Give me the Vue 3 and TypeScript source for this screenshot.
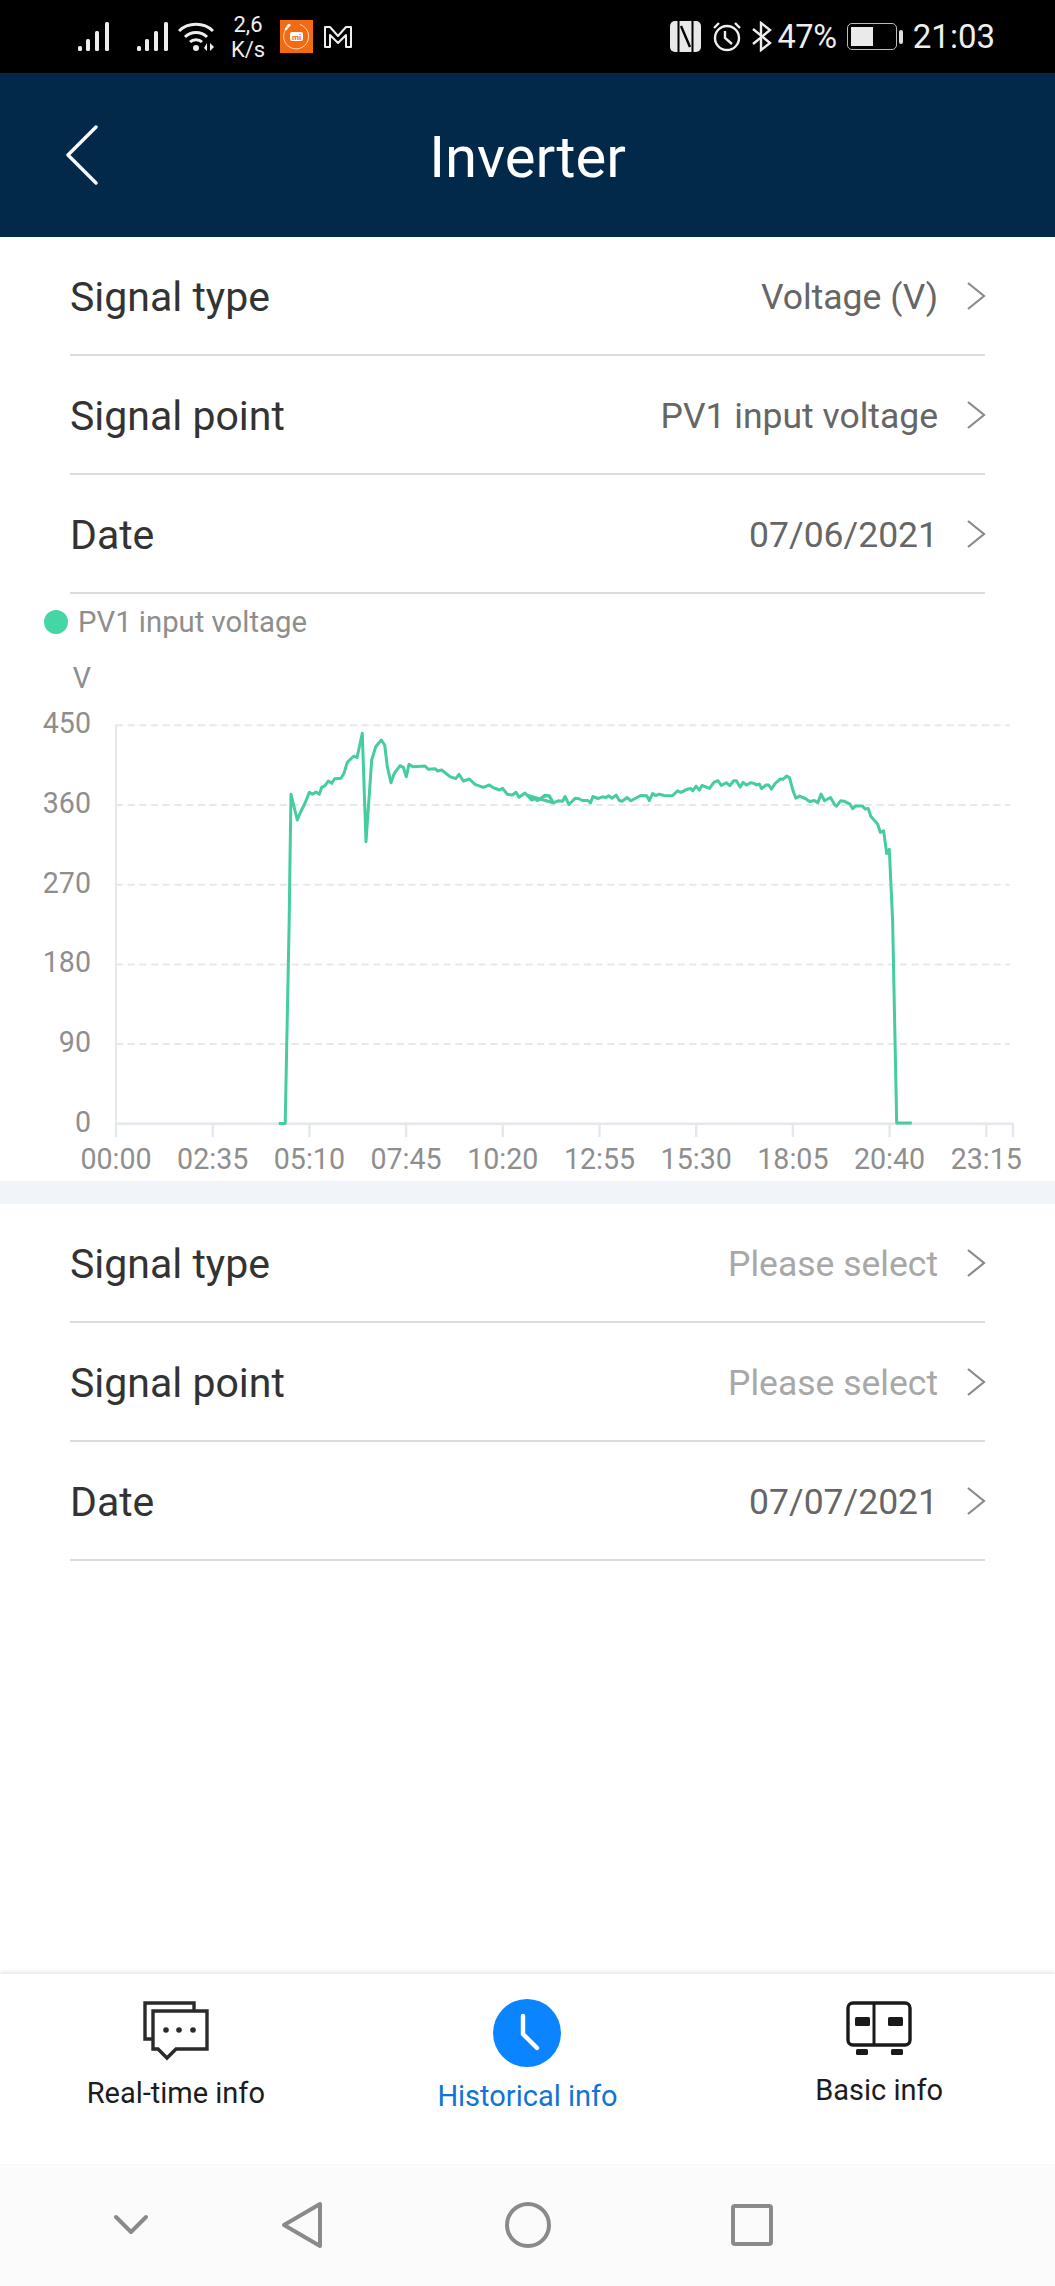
<script setup lang="ts">
type P = [number, number]
const a: P[] = [[278.8,1123.4],[285.2,1123.4],[289.2,920]]
const z9: P[] = [[90,480],[93,283],[112,360],[122,335],[135,310],[148,277],[157,283],[168,276],[178,283],[185,262],[195,257],[205,243],[215,250],[224,236],[243,235],[252,220],[262,187],[272,177],[282,168],[291,173],[307,100],[318,425],[335,180],[347,140],[364,120],[374,135],[382,200],[393,248],[403,220],[420,197],[430,202],[439,230],[447,193],[458,200],[495,198],[505,208],[525,206],[533,213],[545,210],[570,230],[587,236],[597,223],[610,243],[628,237],[645,253],[670,262],[688,255],[700,263],[718,270],[728,265],[742,283],[757,285],[768,277],[777,292],[795,279],[815,300],[825,296],[835,301],[855,286],[868,287],[880,308]]
const z4: P[] = [[0,345],[10,358],[18,354],[28,360],[45,349],[58,345],[65,350],[75,367],[90,361],[103,362],[110,348],[122,372],[140,353],[150,354],[162,360],[178,360],[186,367],[193,348],[208,354],[222,349],[232,351],[240,346],[250,353],[262,344],[272,360],[280,362],[295,351],[306,361],[320,353],[335,345],[353,346],[361,360],[371,339],[380,345],[390,341],[405,345],[430,346],[445,331],[455,336],[470,328],[483,324],[490,331],[500,317],[510,329],[518,315],[540,324],[553,306],[565,301],[575,315],[590,307],[600,316],[612,301],[620,301],[631,320],[640,306],[650,314],[662,307],[672,309],[680,314],[688,311],[695,325],[708,314],[716,314],[724,326],[735,310],[750,296],[758,297],[770,287],[778,292],[788,330],[797,353],[808,347],[825,354],[838,363],[852,360],[862,367],[872,341],[882,361],[900,351],[913,373],[918,377],[930,361],[940,362],[958,371],[966,384],[975,376],[995,376],[1003,385],[1012,384],[1020,408],[1040,430],[1048,455],[1058,450],[1067,518],[1075,505]]
const all: P[] = [
  ...a,
  ...z9.map(([x, y]): P => [260 + x / 3, 700 + y / 3]),
  ...z4.map(([x, y]): P => [528 + x / 2.975, 680 + y / 2.975 - 0.5]),
  [892.6, 920], [896.7, 1123], [911.8, 1123],
]
const curve = all.map(([x, y]) => `${x.toFixed(1)},${y.toFixed(1)}`).join(' ')

const yLabels = ['450', '360', '270', '180', '90', '0']
const yTicks = yLabels.map((t, i) => ({ t, y: 725.3 + i * 79.7 }))
const xLabels = ['00:00', '02:35', '05:10', '07:45', '10:20', '12:55', '15:30', '18:05', '20:40', '23:15']
const xTicks = xLabels.map((t, i) => ({ t, x: 116 + i * 96.7 }))

const first = [
  { k: 'Signal type', v: 'Voltage (V)' },
  { k: 'Signal point', v: 'PV1 input voltage' },
  { k: 'Date', v: '07/06/2021' },
]
const second = [
  { k: 'Signal type', v: 'Please select', ph: true },
  { k: 'Signal point', v: 'Please select', ph: true },
  { k: 'Date', v: '07/07/2021' },
]
</script>

<template>
  <div class="page">
    <div class="status">
      <svg class="sig" width="32" height="30" viewBox="0 0 32 30"><g fill="#eee"><rect x="0" y="24" width="4" height="5" rx="1.5"/><rect x="8" y="17" width="4" height="12" rx="1.5"/><rect x="17" y="9" width="4" height="20" rx="1.5"/><rect x="27" y="0" width="4" height="29" rx="1.5"/></g></svg>
      <svg class="sig sig2" width="32" height="30" viewBox="0 0 32 30"><g fill="#eee"><rect x="0" y="24" width="4" height="5" rx="1.5"/><rect x="8" y="17" width="4" height="12" rx="1.5"/><rect x="17" y="9" width="4" height="20" rx="1.5"/><rect x="27" y="0" width="4" height="29" rx="1.5"/></g></svg>
      <svg class="wifi" width="36" height="30" viewBox="0 0 36 30"><g fill="none" stroke="#eee" stroke-width="3"><path d="M1 9 C10 0 26 0 35 9"/><path d="M7 15 C13 9 23 9 29 15"/><path d="M12 20 C15 17 21 17 24 20"/></g><circle cx="18" cy="26" r="3" fill="#eee"/><path d="M26 26 L29 21 V29 Z M32 21 L36 25 L32 29 Z" fill="#eee"/></svg>
      <div class="speed"><span>2,6</span><span>K/s</span></div>
      <div class="mi"><svg width="33" height="33" viewBox="0 0 33 33"><path d="M11 5 A12.5 12.5 0 1 0 20 4.5" fill="none" stroke="#ffd9b8" stroke-width="1"/><path d="M6 9 L9 5" stroke="#fff" stroke-width="2.5" stroke-linecap="round"/><rect x="10" y="12" width="13" height="9" rx="2" fill="#fff"/><text x="16.5" y="19.5" text-anchor="middle" font-size="8" font-weight="700" fill="#f26b12" class="mitxt">mi</text></svg></div>
      <svg class="gm" width="30" height="24" viewBox="0 0 30 24"><path d="M2 2 H7 L15 11 L23 2 H28 V22 H23 V10 L15 18 L7 10 V22 H2 Z" fill="none" stroke="#eee" stroke-width="2" stroke-linejoin="round"/></svg>
      <div class="grow"></div>
      <svg width="31" height="31" viewBox="0 0 31 31"><rect x="0" y="0" width="31" height="31" rx="5" fill="#e8e8e8"/><path d="M8.5 0 V31 M22.5 0 V31" stroke="#000" stroke-width="2"/><path d="M11 5 L20 26" stroke="#000" stroke-width="2.4" fill="none"/></svg>
      <svg class="alarm" width="30" height="31" viewBox="0 0 30 31"><circle cx="15" cy="17" r="12" fill="none" stroke="#eee" stroke-width="2.4"/><path d="M13 10 V17 L20 23" fill="none" stroke="#eee" stroke-width="2.4"/><path d="M2 7 L7 2 M23 2 L28 7" stroke="#eee" stroke-width="2.4"/></svg>
      <svg class="bt" width="20" height="31" viewBox="0 0 20 31"><path d="M1 8 L18 22 L9 29 V2 L18 9 L1 23" fill="none" stroke="#eee" stroke-width="2.4"/></svg>
      <span class="pct">47%</span>
      <div class="batt"><div class="fill"></div></div>
      <div class="nib"></div>
      <span class="time">21:03</span>
    </div>

    <header class="head">
      <svg class="back" width="34" height="60" viewBox="0 0 34 60"><path d="M31 2 L3 30 L31 58" fill="none" stroke="#fff" stroke-width="3.4" stroke-linecap="round" stroke-linejoin="round"/></svg>
      <h1>Inverter</h1>
      <div></div>
    </header>

    <section class="rows">
      <div v-for="r in first" :key="r.k" class="row">
        <span class="k">{{ r.k }}</span>
        <span class="v">{{ r.v }}</span>
        <svg class="chev" width="20" height="30" viewBox="0 0 20 30"><path d="M2 2 L18 15 L2 28" fill="none" stroke="#8a8a8a" stroke-width="2.2"/></svg>
      </div>
    </section>

    <section class="chart">
      <div class="legend"><i></i><span>PV1 input voltage</span></div>
      <svg class="plot" width="1055" height="531" viewBox="0 650 1055 531">
        <text x="91" y="688" class="lbl" text-anchor="end">V</text>
        <g v-for="(t, i) in yTicks" :key="t.t">
          <line v-if="i < 5" x1="116" x2="1010" :y1="t.y" :y2="t.y" stroke="#e7e8ef" stroke-width="2" stroke-dasharray="7 4.7" />
          <text x="91" :y="t.y + 8" class="lbl" text-anchor="end">{{ t.t }}</text>
        </g>
        <line x1="116" x2="116" y1="725" y2="1137" stroke="#e4e9f0" stroke-width="2" />
        <line x1="115" x2="1014" y1="1123.7" y2="1123.7" stroke="#e4e7f0" stroke-width="2.4" />
        <g v-for="t in xTicks" :key="t.t">
          <line :x1="t.x" :x2="t.x" y1="1124" y2="1137" stroke="#e4e7f0" stroke-width="2.4" />
          <text :x="t.x" y="1168.5" class="lbl" text-anchor="middle">{{ t.t }}</text>
        </g>
        <line x1="1013" x2="1013" y1="1124" y2="1137" stroke="#e4e7f0" stroke-width="2.4" />
        <polyline :points="curve" fill="none" stroke="#45cc9f" stroke-width="3" stroke-linejoin="round" />
      </svg>
    </section>
    <div class="bar"></div>

    <section class="rows">
      <div v-for="r in second" :key="r.k" class="row">
        <span class="k">{{ r.k }}</span>
        <span class="v" :class="{ ph: r.ph }">{{ r.v }}</span>
        <svg class="chev" width="20" height="30" viewBox="0 0 20 30"><path d="M2 2 L18 15 L2 28" fill="none" stroke="#8a8a8a" stroke-width="2.2"/></svg>
      </div>
    </section>

    <div class="spacer"></div>

    <nav class="tabs">
      <div class="tab">
        <svg class="i-chat" width="66" height="60" viewBox="0 0 66 60"><g fill="none" stroke="#2a2a2a" stroke-width="3.4"><path d="M9 38 H2 V2 H51 V9"/><path d="M10 10 H64 V48 H33 L24 57 L15 48 H10 Z"/></g><g fill="#2a2a2a"><circle cx="23" cy="29" r="2.8"/><circle cx="36" cy="29" r="2.8"/><circle cx="50" cy="29" r="2.8"/></g></svg>
        <span class="t t1">Real-time info</span>
      </div>
      <div class="tab on">
        <svg class="i-clock" width="68" height="68" viewBox="0 0 68 68"><circle cx="34" cy="34" r="34" fill="#0a84ff"/><path d="M30 17 V35 L44 49" fill="none" stroke="#fff" stroke-width="4.4" stroke-linecap="round"/></svg>
        <span class="t t2">Historical info</span>
      </div>
      <div class="tab">
        <svg class="i-box" width="66" height="54" viewBox="0 0 66 54"><rect x="2" y="2" width="62" height="42" rx="5" fill="none" stroke="#1a1a1a" stroke-width="3.4"/><line x1="28" x2="28" y1="2" y2="44" stroke="#1a1a1a" stroke-width="3"/><rect x="9" y="16" width="15" height="9" rx="1.5" fill="#1a1a1a"/><rect x="42" y="16" width="15" height="9" rx="1.5" fill="#1a1a1a"/><rect x="10" y="48" width="12" height="6" rx="1.5" fill="#1a1a1a"/><rect x="45" y="48" width="12" height="6" rx="1.5" fill="#1a1a1a"/></svg>
        <span class="t t3">Basic info</span>
      </div>
    </nav>

    <div class="sys">
      <svg class="s1" width="36" height="22" viewBox="0 0 36 22"><path d="M3 3 L18 18 L33 3" fill="none" stroke="#8a8a8a" stroke-width="4" stroke-linecap="round" stroke-linejoin="round"/></svg>
      <svg class="s2" width="42" height="48" viewBox="0 0 42 48"><path d="M39 3 V45 L3 24 Z" fill="none" stroke="#8a8a8a" stroke-width="4" stroke-linejoin="round"/></svg>
      <svg class="s3" width="46" height="46" viewBox="0 0 46 46"><circle cx="23" cy="23" r="21" fill="none" stroke="#8a8a8a" stroke-width="4"/></svg>
      <svg class="s4" width="42" height="42" viewBox="0 0 42 42"><rect x="2" y="2" width="38" height="38" rx="2" fill="none" stroke="#8a8a8a" stroke-width="4"/></svg>
    </div>
  </div>
</template>

<style>
html, body { margin: 0; background: #fff; }
</style>

<style scoped>
.page {
  width: 1055px;
  height: 2286px;
  display: flex;
  flex-direction: column;
  overflow: hidden;
  background: #fff;
  font-family: Roboto, "Liberation Sans", sans-serif;
}
.status {
  height: 73px;
  flex: none;
  background: #000;
  color: #eee;
  display: flex;
  align-items: center;
  padding: 0 60px 0 78px;
  box-sizing: border-box;
}
.sig2 { margin-left: 27px; }
.wifi { margin-left: 9px; }
.speed {
  display: flex;
  flex-direction: column;
  align-items: center;
  width: 34px;
  margin-left: 17px;
  font-size: 22px;
  line-height: 25px;
}
.mi { width: 33px; height: 33px; margin-left: 15px; background: #f26b12; display: flex; }
.mitxt { font-family: Roboto, "Liberation Sans", sans-serif; }
.gm { margin-left: 10px; }
.grow { flex: 1; }
.alarm { margin-left: 11px; }
.bt { margin-left: 10px; }
.pct { margin-left: 5px; font-size: 32.5px; letter-spacing: -.3px; }
.batt {
  margin-left: 10px;
  width: 50px;
  height: 27px;
  box-sizing: border-box;
  border: 1.5px solid #bbb;
  border-radius: 5px;
  padding: 3px;
}
.fill { width: 22px; height: 100%; background: #eaeaea; }
.nib { width: 4px; height: 14px; margin-left: 2px; background: #ddd; border-radius: 2px; }
.time { margin-left: 10px; font-size: 33px; }
.head {
  height: 164px;
  flex: none;
  background: #03294a;
  display: grid;
  grid-template-columns: 1fr auto 1fr;
  align-items: center;
  padding: 0 65px;
  box-sizing: border-box;
}
.back { justify-self: start; }
.head h1 {
  margin: 3px 0 0;
  color: #fff;
  font-weight: 400;
  font-size: 58px;
}
.rows { flex: none; }
.row {
  height: 119px;
  margin: 0 70px;
  padding-top: 2px;
  box-sizing: border-box;
  border-bottom: 2px solid #dcdcdc;
  display: flex;
  align-items: center;
}
.k { flex: 1; font-size: 41px; color: #333; }
.v { font-size: 35.5px; color: #666; }
.v.ph { color: #a8a8a8; }
.chev { margin-left: 28px; margin-right: -1px; margin-top: -2px; }
.chart { flex: none; height: 587px; }
.legend {
  height: 56px;
  display: flex;
  align-items: center;
  padding-left: 44px;
  color: #8e8e8e;
  font-size: 29.3px;
}
.legend i {
  width: 24px;
  height: 24px;
  border-radius: 50%;
  background: #45d6a5;
  margin-right: 10px;
}
.plot { display: block; }
.lbl { fill: #8e8e8e; font-size: 28.6px; font-family: Roboto, "Liberation Sans", sans-serif; }
.bar { flex: none; height: 23px; background: #f1f4f8; }
.spacer { flex: 1; }
.tabs {
  flex: none;
  height: 190px;
  box-sizing: border-box;
  background: #fff;
  display: grid;
  grid-template-columns: repeat(3, 1fr);
  box-shadow: 0 -2px 4px rgba(0, 0, 0, .1);
  position: relative;
}
.tab { display: flex; flex-direction: column; align-items: center; }
.i-chat { margin-top: 27px; }
.i-clock { margin-top: 25px; }
.i-box { margin-top: 27px; }
.t { font-size: 29px; color: #1c1c1c; line-height: 36px; }
.t1 { margin-top: 14px; }
.t2 { margin-top: 11px; }
.t3 { margin-top: 17px; }
.tab.on .t { color: #1273d6; }
.sys {
  flex: none;
  height: 122px;
  background: #fbfbfb;
  display: flex;
  align-items: center;
}
.s1 { margin-left: 113px; }
.s2 { margin-left: 132px; }
.s3 { margin-left: 182px; }
.s4 { margin-left: 180px; }
</style>
